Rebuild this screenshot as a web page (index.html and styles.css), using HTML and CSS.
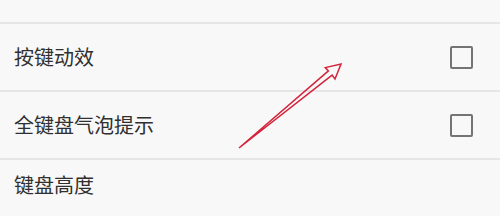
FILE: index.html
```html
<!DOCTYPE html>
<html lang="zh-CN">
<head>
<meta charset="utf-8">
<link rel="stylesheet" href="styles.css">
</head>
<body>
<div class="list">
  <div class="row stub"></div>
  <div class="row item">
    <span class="label">按键动效</span>
    <span class="checkbox"></span>
  </div>
  <div class="row item">
    <span class="label">全键盘气泡提示</span>
    <span class="checkbox"></span>
  </div>
  <div class="row last">
    <span class="label">键盘高度</span>
  </div>
</div>
<svg class="arrow" width="500" height="216" viewBox="0 0 500 216">
  <polygon points="239,148 332.1,75.1 335,79 341,64 325.3,67.6 328.4,70.9" fill="none" stroke="#d3243c" stroke-width="1.5" stroke-linejoin="miter"/>
</svg>
</body>
</html>
```
FILE: styles.css
```css
html, body {
  margin: 0;
  padding: 0;
  background: #f8f8f8;
  width: 500px;
  height: 216px;
  overflow: hidden;
}
body {
  position: relative;
  font-family: "Noto Sans CJK SC", "Noto Sans", sans-serif;
  color: #303030;
}
.list {
  display: flex;
  flex-direction: column;
}
.row {
  border-bottom: 2px solid #e6e6e6;
  box-sizing: border-box;
}
.stub {
  height: 24px;
}
.item {
  height: 68px;
  display: flex;
  align-items: center;
  justify-content: space-between;
  padding: 0 27px 0 14px;
}
.label {
  font-size: 20px;
  line-height: 24px;
}
.checkbox {
  width: 23px;
  height: 23px;
  box-sizing: border-box;
  border: 2.5px solid #747474;
  border-radius: 2px;
}
.last {
  border-bottom: none;
  padding: 13px 14px 0;
}
.arrow {
  position: absolute;
  left: 0;
  top: 0;
}
```
